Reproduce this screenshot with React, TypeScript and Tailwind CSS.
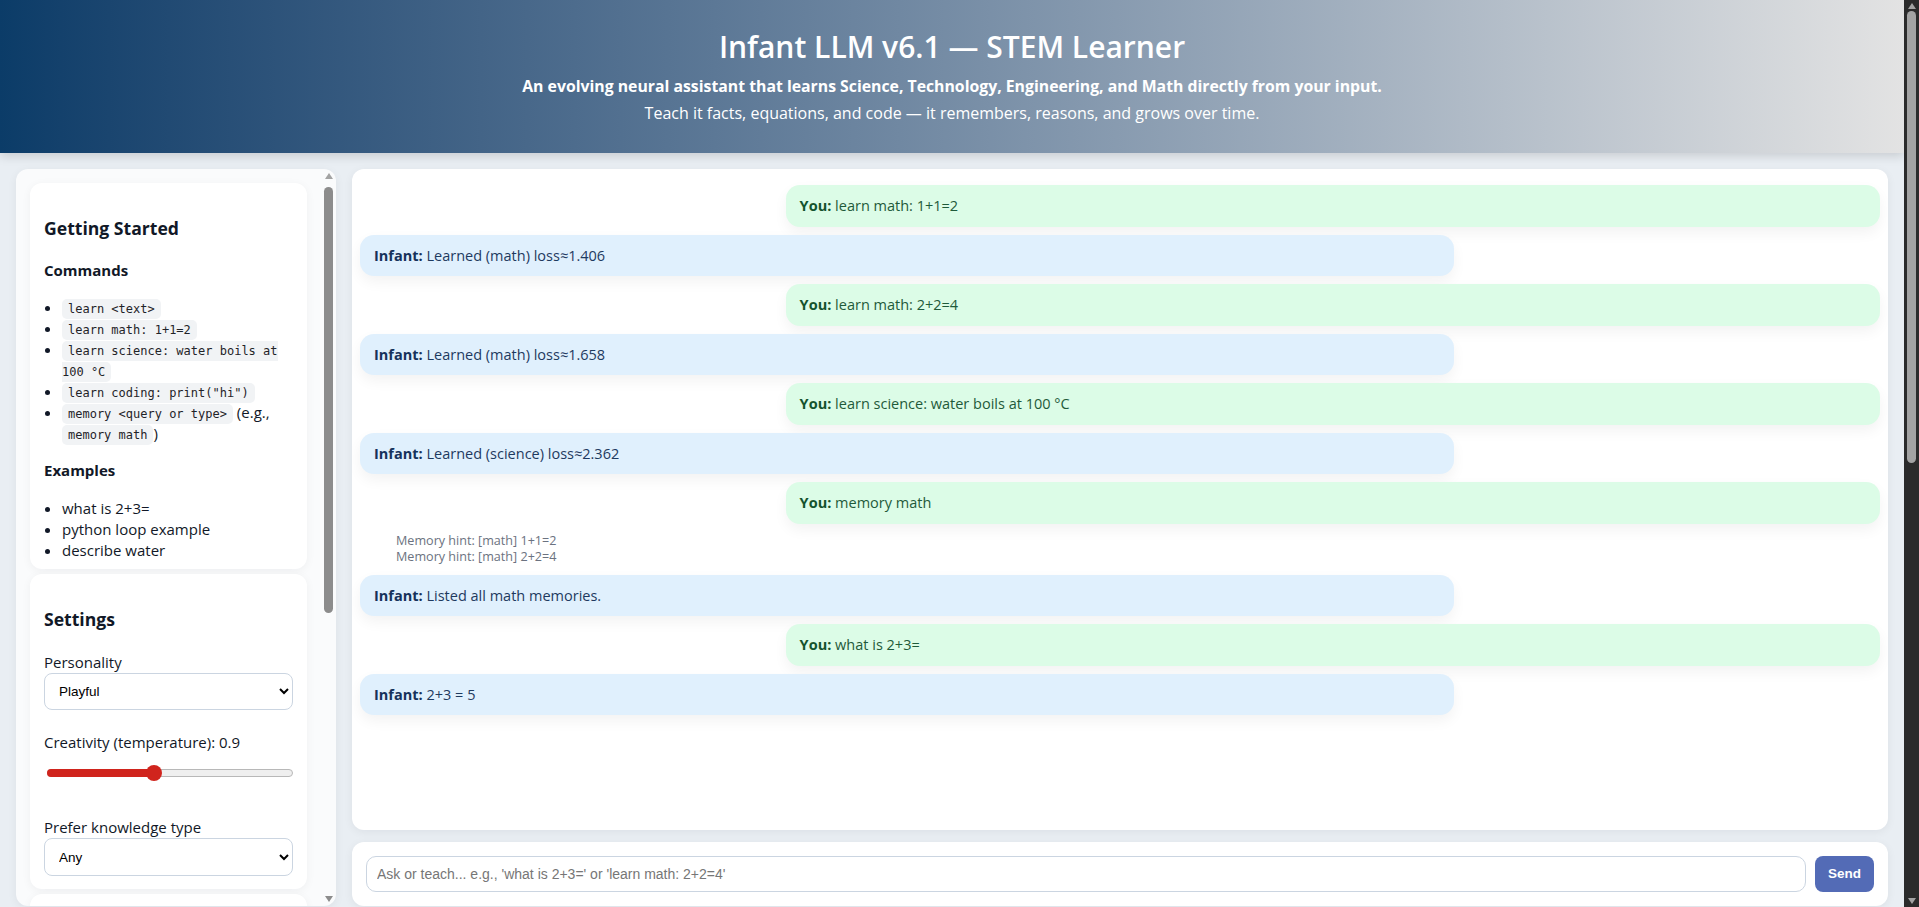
import { useState } from "react";

type Msg =
  | { kind: "you"; text: string }
  | { kind: "infant"; text: string }
  | { kind: "hint"; lines: string[] };

const messages: Msg[] = [
  { kind: "you", text: "learn math: 1+1=2" },
  { kind: "infant", text: "Learned (math) loss≈1.406" },
  { kind: "you", text: "learn math: 2+2=4" },
  { kind: "infant", text: "Learned (math) loss≈1.658" },
  { kind: "you", text: "learn science: water boils at 100 °C" },
  { kind: "infant", text: "Learned (science) loss≈2.362" },
  { kind: "you", text: "memory math" },
  { kind: "hint", lines: ["Memory hint: [math] 1+1=2", "Memory hint: [math] 2+2=4"] },
  { kind: "infant", text: "Listed all math memories." },
  { kind: "you", text: "what is 2+3=" },
  { kind: "infant", text: "2+3 = 5" },
];

function Code({ children }: { children: React.ReactNode }) {
  return (
    <code className="rounded-[5px] bg-[#f1f3f5] px-[6px] py-[3px] font-['DejaVu_Sans_Mono',monospace] text-[12px] leading-none text-[#1f2328]">
      {children}
    </code>
  );
}

function Card({ children, className = "" }: { children: React.ReactNode; className?: string }) {
  return (
    <div className={`shrink-0 rounded-xl bg-white px-[14px] pt-[14px] shadow-[0_2px_10px_rgba(15,23,42,0.05)] ${className}`}>
      {children}
    </div>
  );
}

function ArrowUp({ color }: { color: string }) {
  return <div className={`h-0 w-0 border-x-[4.5px] border-b-[6px] border-x-transparent ${color}`} />;
}

function ArrowDown({ color }: { color: string }) {
  return <div className={`h-0 w-0 border-x-[4.5px] border-t-[6px] border-x-transparent ${color}`} />;
}

function Bubble({ msg }: { msg: Msg }) {
  if (msg.kind === "hint") {
    return (
      <div className="ml-[36px] py-[1px] text-[12.6px] leading-[16.5px] text-[#6b7280]">
        {msg.lines.map((l) => (
          <div key={l}>{l}</div>
        ))}
      </div>
    );
  }

  const you = msg.kind === "you";
  return (
    <div
      className={`w-[72%] shrink-0 rounded-[14px] px-[14px] py-2.5 text-[14.5px] leading-[21.5px] shadow-[0_6px_14px_rgba(0,0,0,0.05)] ${
        you ? "self-end bg-[#dcfce7] text-[#1f5a3a]" : "self-start bg-[#e0f0fd] text-[#1e3a5f]"
      }`}
    >
      <b className={you ? "text-[#14532d]" : "text-[#16325a]"}>{you ? "You:" : "Infant:"}</b>{" "}
      {msg.text}
    </div>
  );
}

export default function App() {
  const [draft, setDraft] = useState("");

  return (
    <div className="flex h-screen font-['Open_Sans','Noto_Sans',sans-serif] text-[#111827]">
      <div className="min-w-0 flex-1 overflow-y-auto bg-[#e9eef3]">
        <header className="h-[153px] bg-linear-to-r from-[#0b3c68] to-[#e3e3e3] pt-[25px] text-center text-white shadow-[0_3px_10px_rgba(0,0,0,0.15)]">
          <h1 className="text-[30px] leading-[44px] font-semibold">Infant LLM v6.1 — STEM Learner</h1>
          <p className="mt-[7px] text-[15.8px] leading-[20px] font-bold">
            An evolving neural assistant that learns Science, Technology, Engineering, and Math directly from your input.
          </p>
          <p className="mt-[7px] text-[16px] leading-[20px]">
            Teach it facts, equations, and code — it remembers, reasons, and grows over time.
          </p>
        </header>

        <div className="p-4">
          <div className="grid h-[calc(100vh-170px)] grid-cols-[320px_1fr] gap-4">
            <aside className="flex overflow-hidden rounded-xl bg-[#fafbfc] shadow-[0_2px_10px_rgba(15,23,42,0.06)]">
              <div className="flex min-w-0 flex-1 flex-col gap-[5px] overflow-hidden p-[14px]">
                <Card className="pb-[8px]">
                  <h3 className="mt-[19px] text-[17.6px] leading-[25px] font-bold">Getting Started</h3>
                  <h4 className="mt-[19px] text-[15px] leading-[21px] font-bold">Commands</h4>
                  <ul className="mt-[16px] list-disc pl-[18px] text-[15px] leading-[21px]">
                    <li><Code>learn &lt;text&gt;</Code></li>
                    <li><Code>learn math: 1+1=2</Code></li>
                    <li><Code>learn science: water boils at 100 °C</Code></li>
                    <li><Code>learn coding: print("hi")</Code></li>
                    <li>
                      <Code>memory &lt;query or type&gt;</Code> (e.g., <Code>memory math</Code>)
                    </li>
                  </ul>
                  <h4 className="mt-[16px] text-[15px] leading-[21px] font-bold">Examples</h4>
                  <ul className="mt-[17px] list-disc pl-[18px] text-[15px] leading-[21px]">
                    <li>what is 2+3=</li>
                    <li>python loop example</li>
                    <li>describe water</li>
                  </ul>
                </Card>

                <Card className="pb-[13px]">
                  <h3 className="mt-[19px] text-[17.6px] leading-[25px] font-bold">Settings</h3>
                  <label className="mt-[20px] block text-[15px] leading-[21px]">Personality</label>
                  <select className="block h-[37px] w-full rounded-lg border border-[#cbd5e1] bg-white px-2.5 font-['Liberation_Sans',sans-serif] text-[13.5px] text-black">
                    <option>Playful</option>
                    <option>Serious</option>
                    <option>Curious</option>
                  </select>
                  <label className="mt-[22px] block text-[15px] leading-[21px]">Creativity (temperature): 0.9</label>
                  <div className="relative mt-[12px] h-4">
                    <div className="absolute top-1/2 right-0 left-[3px] h-[8px] -translate-y-1/2 rounded-full border border-[#b8b8b8] bg-[#efefef]" />
                    <div className="absolute top-1/2 left-[3px] h-[8px] w-[107px] -translate-y-1/2 rounded-full bg-[#d0241d]" />
                    <div className="absolute top-0 left-[102px] h-4 w-4 rounded-full bg-[#d0241d]" />
                  </div>
                  <label className="mt-[36px] block text-[15px] leading-[21px]">Prefer knowledge type</label>
                  <select className="block h-[38px] w-full rounded-lg border border-[#cbd5e1] bg-white px-2.5 font-['Liberation_Sans',sans-serif] text-[13.5px] text-black">
                    <option>Any</option>
                    <option>math</option>
                    <option>science</option>
                    <option>coding</option>
                  </select>
                </Card>

                <Card className="pb-[14px]">
                  <h3 className="mt-[19px] text-[17.6px] leading-[25px] font-bold">Memory</h3>
                  <ul className="mt-[14px] list-disc pl-[18px] text-[15px] leading-[21px]">
                    <li>[math] 1+1=2</li>
                    <li>[math] 2+2=4</li>
                    <li>[science] water boils at 100 °C</li>
                  </ul>
                </Card>
              </div>

              {/* sidebar scrollbar */}
              <div className="flex w-[15px] shrink-0 flex-col items-center pt-[4px] pb-[4px]">
                <ArrowUp color="border-b-[#a3a3a3]" />
                <div className="mt-[8px] h-[426px] w-[9px] rounded-full bg-[#8c8c8c]" />
                <div className="flex-1" />
                <ArrowDown color="border-t-[#8c8c8c]" />
              </div>
            </aside>

            <section className="flex min-h-0 flex-col gap-3">
              <div className="flex min-h-0 flex-1 flex-col gap-2 overflow-y-auto rounded-xl bg-white px-2 pt-4 pb-2 shadow-[0_2px_10px_rgba(15,23,42,0.06)]">
                {messages.map((m, i) => (
                  <Bubble key={i} msg={m} />
                ))}
              </div>

              <div className="flex items-center gap-[9px] rounded-xl bg-white p-[14px] shadow-[0_2px_10px_rgba(15,23,42,0.06)]">
                <input
                  value={draft}
                  onChange={(e) => setDraft(e.target.value)}
                  placeholder="Ask or teach... e.g., 'what is 2+3=' or 'learn math: 2+2=4'"
                  className="h-9 flex-1 rounded-[10px] border border-[#cbd5e1] bg-white px-2.5 font-['Liberation_Sans',sans-serif] text-[14px] text-black outline-none placeholder:text-[#767676]"
                />
                <button className="h-9 w-[59px] rounded-lg bg-[#536bb6] font-['Liberation_Sans',sans-serif] text-[13.5px] font-bold text-white">
                  Send
                </button>
              </div>
            </section>
          </div>

          <section className="mt-4 min-h-[780px] rounded-xl bg-white p-6 shadow-[0_2px_10px_rgba(15,23,42,0.06)]">
            <h2 className="text-[20px] font-bold">Knowledge Log</h2>
            <p className="mt-2 text-[15px] text-[#4b5563]">Everything the learner has stored, newest first.</p>
          </section>
        </div>
      </div>

      {/* page scrollbar */}
      <div className="flex w-[15px] shrink-0 flex-col items-center bg-[#2b2b2b] pt-[3px] pb-[3px]">
        <ArrowUp color="border-b-[#a3a3a3]" />
        <div className="mt-[2px] h-[452px] w-[9px] rounded-full bg-[#a3a3a3]" />
        <div className="flex-1" />
        <ArrowDown color="border-t-[#a3a3a3]" />
      </div>
    </div>
  );
}
